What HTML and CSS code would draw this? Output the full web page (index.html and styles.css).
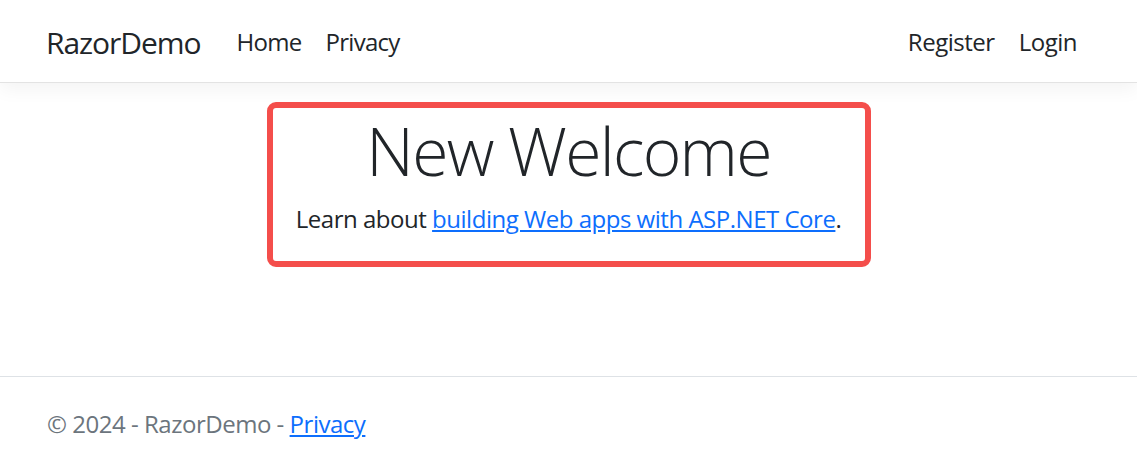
FILE: index.html
```html
<!DOCTYPE html>
<html lang="en">
<head>
<meta charset="UTF-8">
<meta name="viewport" content="width=device-width, initial-scale=1.0">
<title>Home page - RazorDemo</title>
<link rel="stylesheet" href="styles.css">
</head>
<body>
<header class="navbar">
  <a class="navbar-brand" href="#">RazorDemo</a>
  <ul class="nav-main">
    <li><a class="nav-link" href="#">Home</a></li>
    <li><a class="nav-link" href="#">Privacy</a></li>
  </ul>
  <ul class="nav-login">
    <li><a class="nav-link" href="#">Register</a></li>
    <li><a class="nav-link" href="#">Login</a></li>
  </ul>
</header>

<main class="content">
  <div class="welcome-box">
    <h1 class="display-4">New Welcome</h1>
    <p class="lead-text">Learn about <a href="#">building Web apps with ASP.NET Core</a>.</p>
  </div>
</main>

<footer class="footer">
  &copy; 2024 - RazorDemo - <a href="#">Privacy</a>
</footer>
</body>
</html>
```

FILE: styles.css
```css
html, body {
  height: 100%;
}
body {
  font-family: "Open Sans", "Noto Sans", sans-serif;
  font-size: 24px;
  line-height: 1.5;
  letter-spacing: -0.02em;
  color: #212529;
  background-color: #fff;
  margin: 0;
  display: flex;
  flex-direction: column;
}
a {
  color: #0d6efd;
}
.navbar {
  display: flex;
  align-items: center;
  box-sizing: border-box;
  height: 83px;
  padding: 2px 48px 0 46px;
  border-bottom: 1px solid #e3e3e3;
  box-shadow: 0 6px 18px rgba(0, 0, 0, 0.05);
}
.navbar-brand {
  font-size: 30px;
  letter-spacing: -0.035em;
  color: #212529;
  text-decoration: none;
  margin-right: 24px;
}
.navbar ul {
  list-style: none;
  margin: 0;
  padding: 0;
  display: flex;
}
.nav-main {
  flex: 1;
}
.nav-link {
  display: block;
  padding: 0 12px;
  color: #212529;
  text-decoration: none;
}
.nav-main .nav-link {
  letter-spacing: -0.03em;
}
.content {
  flex: 1;
  padding-top: 19px;
}
.welcome-box {
  width: 604px;
  box-sizing: border-box;
  margin: 0 auto;
  border: 6px solid #f44e4b;
  border-radius: 9px;
  text-align: center;
  padding: 3px 0 24px;
}
.display-4 {
  font-size: 66px;
  font-weight: 300;
  letter-spacing: -0.026em;
  line-height: 1.2;
  margin: 0 0 11px;
}
.lead-text {
  margin: 0;
}
.footer {
  border-top: 1px solid #dee2e6;
  line-height: 87px;
  padding: 3px 0 0 47px;
  color: #6c757d;
  white-space: nowrap;
}
```
